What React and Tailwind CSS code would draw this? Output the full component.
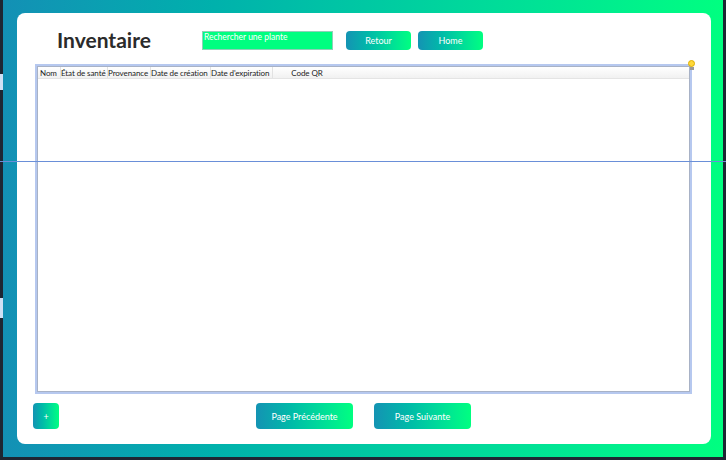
import React, { useState } from 'react';

const columns = [
  { label: 'Nom', width: 'w-[21px]' },
  { label: 'État de santé', width: 'w-[47px]' },
  { label: 'Provenance', width: 'w-[43px]' },
  { label: 'Date de création', width: 'w-[60px]' },
  { label: "Date d'expiration", width: 'w-[62px]' },
  { label: 'Code QR', width: 'w-[68px]', center: true },
];

function GradientButton({ children, className = '' }) {
  return (
    <button
      type="button"
      className={`flex items-center justify-center rounded-[4px] bg-linear-to-r from-[#1493b3] to-[#00ff80] text-white text-[9px] leading-none ${className}`}
    >
      {children}
    </button>
  );
}

function App() {
  const [search, setSearch] = useState('');

  return (
    <div className="relative w-[726px] h-[460px] bg-[#1e2633] overflow-hidden" style={{ fontFamily: 'Lato, "Liberation Sans", sans-serif' }}>
      <div className="ml-[3px] w-[720px] h-[457px] bg-linear-to-r from-[#1390b5] to-[#00ff80] pt-[13px] pl-[14px]">
        <div className="w-[694px] h-[431px] bg-white rounded-[8px] flex flex-col">
          <div className="flex items-center h-[51px] pt-[3px]">
            <h1 className="ml-[40px] w-[145px] text-[21px] font-bold text-[#2b2b2b]">Inventaire</h1>
            <input
              type="text"
              value={search}
              onChange={(event) => setSearch(event.target.value)}
              placeholder="Rechercher une plante"
              className="w-[131px] h-[19px] px-[1px] pb-[6px] bg-[#00ff80] border border-[#8fd0b8] text-[8.5px] text-white placeholder-white focus:outline-none"
            />
            <GradientButton className="ml-[13px] w-[65px] h-[19px]">Retour</GradientButton>
            <GradientButton className="ml-[7px] w-[65px] h-[19px]">Home</GradientButton>
          </div>

          <div className="relative ml-[18px] w-[657px] h-[330px] border-2 border-[#b6c8ef]">
            <div className="h-full border border-[#a8b2c6] bg-white">
              <div className="flex h-[12px] bg-linear-to-b from-white to-[#f1f1f1] border-b border-[#e4e4e4] pl-[2px]">
                {columns.map((col) => (
                  <div
                    key={col.label}
                    className={`${col.width} ${col.center ? 'text-center' : 'border-r border-[#e2e2e2]'} text-[8px] tracking-[-0.1px] leading-[12px] text-[#1c1c1c] whitespace-nowrap overflow-hidden`}
                  >
                    {col.label}
                  </div>
                ))}
              </div>
            </div>
            <div className="absolute -top-[6px] -right-[5px] flex flex-col items-center">
              <div className="w-[7px] h-[7px] rounded-full bg-[#ffd83a] border border-[#e0b000]" />
              <div className="w-[4px] h-[3px] bg-[#9a9a9a]" />
            </div>
          </div>

          <div className="flex items-center mt-[9px] h-[26px]">
            <GradientButton className="ml-[16px] w-[26px] h-[26px]">+</GradientButton>
            <GradientButton className="ml-[197px] w-[97px] h-[26px]">Page Précédente</GradientButton>
            <GradientButton className="ml-[21px] w-[97px] h-[26px]">Page Suivante</GradientButton>
          </div>
        </div>
      </div>

      <div className="absolute left-0 top-[161px] w-full h-px bg-[#6a8fd8]" />
      <div className="absolute left-0 top-[74px] w-[3px] h-[16px] bg-[#cfe0f5]" />
      <div className="absolute left-0 top-[298px] w-[3px] h-[20px] bg-[#cfe0f5]" />
    </div>
  );
}

export default App;
